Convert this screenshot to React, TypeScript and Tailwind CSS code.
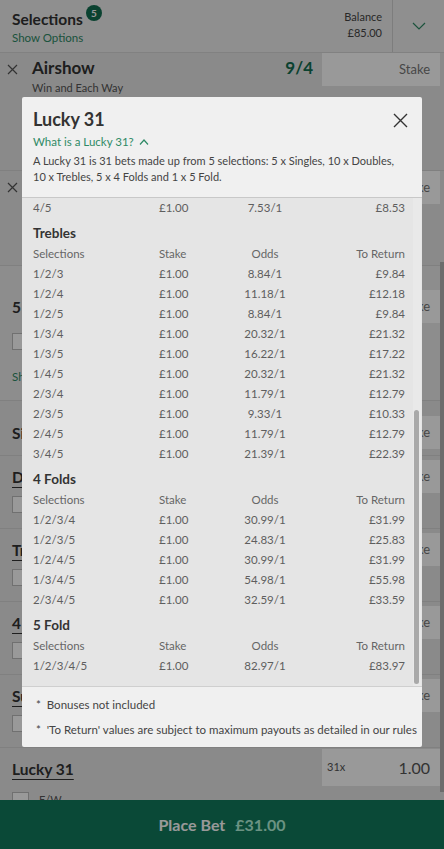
import React from 'react';

type Row = [string, string, string, string];

const trebles: Row[] = [
  ['1/2/3', '£1.00', '8.84/1', '£9.84'],
  ['1/2/4', '£1.00', '11.18/1', '£12.18'],
  ['1/2/5', '£1.00', '8.84/1', '£9.84'],
  ['1/3/4', '£1.00', '20.32/1', '£21.32'],
  ['1/3/5', '£1.00', '16.22/1', '£17.22'],
  ['1/4/5', '£1.00', '20.32/1', '£21.32'],
  ['2/3/4', '£1.00', '11.79/1', '£12.79'],
  ['2/3/5', '£1.00', '9.33/1', '£10.33'],
  ['2/4/5', '£1.00', '11.79/1', '£12.79'],
  ['3/4/5', '£1.00', '21.39/1', '£22.39'],
];

const fourFolds: Row[] = [
  ['1/2/3/4', '£1.00', '30.99/1', '£31.99'],
  ['1/2/3/5', '£1.00', '24.83/1', '£25.83'],
  ['1/2/4/5', '£1.00', '30.99/1', '£31.99'],
  ['1/3/4/5', '£1.00', '54.98/1', '£55.98'],
  ['2/3/4/5', '£1.00', '32.59/1', '£33.59'],
];

const fiveFold: Row[] = [['1/2/3/4/5', '£1.00', '82.97/1', '£83.97']];

const BetRow = ({ row, head }: { row: Row; head?: boolean }) => (
  <div className={`grid grid-cols-[126px_70px_72px_1fr] h-[20px] items-center text-[11.5px] ${head ? 'text-[#666]' : 'text-[#5e5e5e]'}`}>
    <div>{row[0]}</div>
    <div>{row[1]}</div>
    <div className="text-center">{row[2]}</div>
    <div className="text-right">{row[3]}</div>
  </div>
);

const Section = ({ title, rows }: { title: string; rows: Row[] }) => (
  <div>
    <div className="h-[26px] pt-[6px] text-[13.5px] leading-[18px] font-bold text-[#333]">{title}</div>
    <BetRow head row={['Selections', 'Stake', 'Odds', 'To Return']} />
    {rows.map((r) => (
      <BetRow key={r[0]} row={r} />
    ))}
  </div>
);

const Checkbox = () => <div className="w-[17px] h-[17px] border border-[#bbb] bg-white" />;

const StakeBox = ({ children }: { children?: React.ReactNode }) => (
  <div className="w-[118px] h-[33px] bg-white flex items-center justify-end pr-[10px] text-[13px] text-[#777]">
    {children ?? 'Stake'}
  </div>
);

const MultiRow = ({ title }: { title: string }) => (
  <div className="h-[73px] shrink-0 border-t border-[#d6d6d6] flex flex-col">
    <div className="flex justify-between items-start pt-[4px]">
      <div className="pl-[12px] pt-[6px] text-[15.5px] font-bold text-[#333] underline underline-offset-4">{title}</div>
      <div className="mr-[4px]">
        <StakeBox />
      </div>
    </div>
    <div className="pl-[12px] pt-[3px] flex items-center gap-[10px] text-[11px] text-[#555]">
      <Checkbox />
      <span>E/W</span>
    </div>
  </div>
);

const Cross = () => (
  <svg width="11" height="11" viewBox="0 0 11 11" stroke="#555" strokeWidth="1.2">
    <path d="M1 1l9 9M10 1l-9 9" />
  </svg>
);

const Background = () => (
  <div className="w-[444px] h-[849px] bg-[#e6e6e6] flex flex-col relative overflow-hidden">
    <div className="h-[53px] bg-[#eeeeee] border-b border-[#d8d8d8] flex shrink-0">
      <div className="flex-1 pl-[12px] pt-[7px]">
        <div className="relative inline-block text-[15.5px] leading-[22px] font-bold text-[#333]">
          Selections
          <span className="absolute -right-[19px] -top-[3px] w-[16px] h-[16px] rounded-full bg-[#126e51] text-white text-[10px] font-bold flex items-center justify-center">5</span>
        </div>
        <div className="text-[11.5px] leading-[14px] text-[#2f8a66]">Show Options</div>
      </div>
      <div className="pr-[10px] pt-[9px] text-right text-[11px] leading-[16px] text-[#444]">
        <div>Balance</div>
        <div>£85.00</div>
      </div>
      <div className="w-[52px] border-l border-[#d0d0d0] flex items-center justify-center">
        <svg width="14" height="8" viewBox="0 0 14 8" fill="none" stroke="#2f8a66" strokeWidth="1.2">
          <path d="M1 1l6 6 6-6" />
        </svg>
      </div>
    </div>
    <div className="h-[117px] flex shrink-0">
      <div className="flex-1 flex">
        <div className="w-[32px] pt-[11px] pl-[7px]">
          <Cross />
        </div>
        <div>
          <div className="text-[17px] leading-[22px] font-bold text-[#333] pt-[4px]">Airshow</div>
          <div className="text-[11px] leading-[14px] text-[#555] pt-[2px]">Win and Each Way</div>
        </div>
        <div className="ml-auto pr-[9px] pt-[4px] text-[17px] leading-[22px] font-bold text-[#126e51]">9/4</div>
      </div>
      <div className="mr-[4px]"><StakeBox /></div>
    </div>
    <div className="h-[95px] flex shrink-0 border-t border-[#d6d6d6]">
      <div className="flex-1 pl-[7px] pt-[11px]">
        <Cross />
      </div>
      <div className="mr-[4px]"><StakeBox /></div>
    </div>
    <div className="h-[135px] shrink-0 bg-[#ebebeb] border-t border-[#d6d6d6] flex flex-col">
      <div className="flex justify-between pt-[24px]">
        <div className="pl-[12px] pt-[6px] text-[15.5px] font-bold text-[#333]">5 Folds</div>
        <div className="mr-[4px]"><StakeBox /></div>
      </div>
      <div className="pl-[12px] pt-[10px]"><Checkbox /></div>
      <div className="pl-[12px] pt-[18px] text-[11.5px] text-[#2f8a66]">Show all multiples</div>
    </div>
    <div className="h-[55px] shrink-0 border-t border-[#d6d6d6] flex justify-between items-start pt-[15px]">
      <div className="pl-[12px] pt-[6px] text-[15.5px] font-bold text-[#333]">Singles</div>
      <div className="mr-[4px]"><StakeBox /></div>
    </div>
    <MultiRow title="Doubles" />
    <MultiRow title="Trebles" />
    <MultiRow title="4 Folds" />
    <MultiRow title="Super Yankee" />
    <div className="border-t border-[#d6d6d6] flex-1 min-h-0 overflow-hidden">
      <div className="flex justify-between items-start pt-[1px]">
        <div className="pl-[12px] pt-[9px] text-[15.5px] font-bold text-[#333] underline underline-offset-4">Lucky 31</div>
        <div className="mr-[4px] w-[118px] h-[37px] bg-white flex items-center justify-between px-[5px] pr-[10px]">
          <span className="text-[11px] text-[#555]">31x</span>
          <span className="text-[16px] text-[#555]">1.00</span>
        </div>
      </div>
      <div className="pl-[12px] pt-[6px] flex items-center gap-[10px] text-[11px] text-[#555]">
        <Checkbox />
        <span>E/W</span>
      </div>
    </div>
    <div className="absolute right-0 top-[262px] w-[4px] h-[530px] bg-[#b5b5b5]" />
    <div className="h-[49px] shrink-0 bg-[#127b5d] flex items-center justify-center gap-[10px] text-[16px] font-bold">
      <span className="text-white">Place Bet</span>
      <span className="text-[#b3f3da]">£31.00</span>
    </div>
  </div>
);

const App = () => {
  return (
    <div className="relative w-[444px] h-[849px] overflow-hidden font-['Lato',sans-serif]">
      <Background />
      <div className="absolute inset-0 bg-black/40" />
      <div className="absolute left-[22px] top-[97px] w-[400px] h-[650px] bg-[#f0f0f0] rounded-[2px] flex flex-col overflow-hidden">
        <div className="h-[101px] shrink-0 px-[11px] pt-[10px] border-b border-[#c8c8c8] relative">
          <div className="text-[18px] leading-[24px] font-bold text-[#333]">Lucky 31</div>
          <button className="absolute right-[14px] top-[16px]">
            <svg width="15" height="15" viewBox="0 0 15 15" stroke="#333" strokeWidth="1.4"><path d="M1 1l13 13M14 1L1 14" /></svg>
          </button>
          <div className="mt-[3px] flex items-center gap-[5px] text-[11.5px] leading-[16px] text-[#2f8a66]">
            What is a Lucky 31?
            <svg width="10" height="6" viewBox="0 0 10 6" fill="none" stroke="#2f8a66" strokeWidth="1.2"><path d="M1 5.5l4-4.5 4 4.5" /></svg>
          </div>
          <div className="mt-[3px] pr-[16px] text-[11px] leading-[16px] text-[#444]">
            A Lucky 31 is 31 bets made up from 5 selections: 5 x Singles, 10 x Doubles, 10 x Trebles, 5 x 4 Folds and 1 x 5 Fold.
          </div>
        </div>
        <div className="h-[488px] shrink-0 bg-[#e5e5e5] relative overflow-hidden">
          <div className="pl-[11px] pr-[17px]">
            <BetRow row={['4/5', '£1.00', '7.53/1', '£8.53']} />
            <Section title="Trebles" rows={trebles} />
            <Section title="4 Folds" rows={fourFolds} />
            <Section title="5 Fold" rows={fiveFold} />
          </div>
          <div className="absolute right-[1px] top-0 bottom-0 w-[8px] bg-[#e9e9e9]">
            <div className="absolute left-[1px] top-[212px] bottom-[2px] w-[5px] rounded-full bg-[#a9a9a9]" />
          </div>
        </div>
        <div className="flex-1 border-t border-[#cfcfcf] pl-[14px] pt-[9px] text-[11.5px] leading-[18px] text-[#444] flex flex-col gap-[7px]">
          <div>*&nbsp; Bonuses not included</div>
          <div>*&nbsp; 'To Return' values are subject to maximum payouts as detailed in our rules</div>
        </div>
      </div>
    </div>
  );
};

export default App;
